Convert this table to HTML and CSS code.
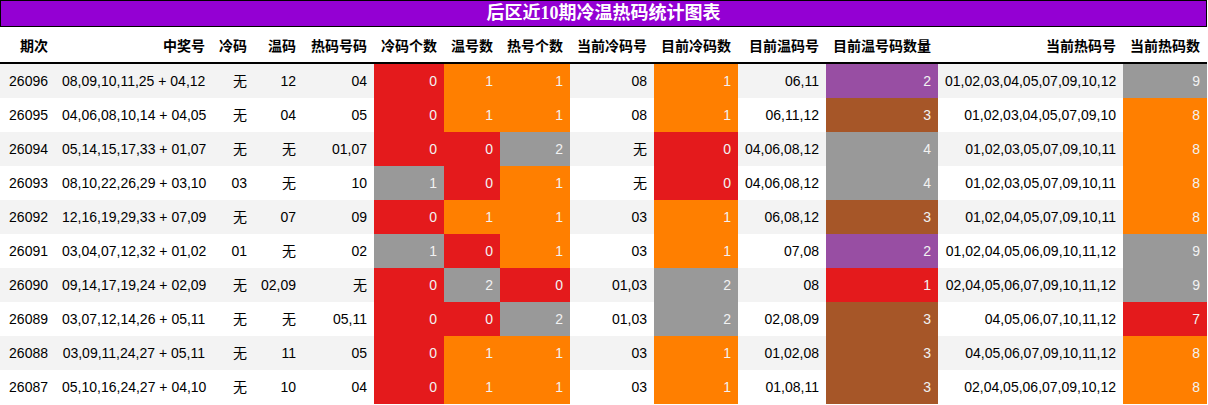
FILE: index.html
```html
<!DOCTYPE html>
<html lang="zh">
<head>
<meta charset="utf-8">
<title>后区近10期冷温热码统计图表</title>
<link rel="stylesheet" href="styles.css">
</head>
<body>
<div class="board">
  <div class="title">后区近10期冷温热码统计图表</div>
  <table class="stats">
    <colgroup>
      <col class="c1"><col class="c2"><col class="c3"><col class="c4"><col class="c5">
      <col class="c6"><col class="c7"><col class="c8"><col class="c9"><col class="c10">
      <col class="c11"><col class="c12"><col class="c13"><col class="c14">
    </colgroup>
    <thead>
      <tr>
        <th>期次</th><th>中奖号</th><th>冷码</th><th>温码</th><th>热码号码</th>
        <th>冷码个数</th><th>温号数</th><th>热号个数</th><th>当前冷码号</th><th>目前冷码数</th>
        <th>目前温码号</th><th>目前温号码数量</th><th>当前热码号</th><th>当前热码数</th>
      </tr>
    </thead>
    <tbody>
      <tr>
        <td>26096</td><td>08,09,10,11,25 + 04,12</td><td>无</td><td>12</td><td>04</td>
        <td class="red">0</td><td class="orange">1</td><td class="orange">1</td><td>08</td><td class="orange">1</td>
        <td>06,11</td><td class="purple">2</td><td>01,02,03,04,05,07,09,10,12</td><td class="gray">9</td>
      </tr>
      <tr>
        <td>26095</td><td>04,06,08,10,14 + 04,05</td><td>无</td><td>04</td><td>05</td>
        <td class="red">0</td><td class="orange">1</td><td class="orange">1</td><td>08</td><td class="orange">1</td>
        <td>06,11,12</td><td class="brown">3</td><td>01,02,03,04,05,07,09,10</td><td class="orange">8</td>
      </tr>
      <tr>
        <td>26094</td><td>05,14,15,17,33 + 01,07</td><td>无</td><td>无</td><td>01,07</td>
        <td class="red">0</td><td class="red">0</td><td class="gray">2</td><td>无</td><td class="red">0</td>
        <td>04,06,08,12</td><td class="gray">4</td><td>01,02,03,05,07,09,10,11</td><td class="orange">8</td>
      </tr>
      <tr>
        <td>26093</td><td>08,10,22,26,29 + 03,10</td><td>03</td><td>无</td><td>10</td>
        <td class="gray">1</td><td class="red">0</td><td class="orange">1</td><td>无</td><td class="red">0</td>
        <td>04,06,08,12</td><td class="gray">4</td><td>01,02,03,05,07,09,10,11</td><td class="orange">8</td>
      </tr>
      <tr>
        <td>26092</td><td>12,16,19,29,33 + 07,09</td><td>无</td><td>07</td><td>09</td>
        <td class="red">0</td><td class="orange">1</td><td class="orange">1</td><td>03</td><td class="orange">1</td>
        <td>06,08,12</td><td class="brown">3</td><td>01,02,04,05,07,09,10,11</td><td class="orange">8</td>
      </tr>
      <tr>
        <td>26091</td><td>03,04,07,12,32 + 01,02</td><td>01</td><td>无</td><td>02</td>
        <td class="gray">1</td><td class="red">0</td><td class="orange">1</td><td>03</td><td class="orange">1</td>
        <td>07,08</td><td class="purple">2</td><td>01,02,04,05,06,09,10,11,12</td><td class="gray">9</td>
      </tr>
      <tr>
        <td>26090</td><td>09,14,17,19,24 + 02,09</td><td>无</td><td>02,09</td><td>无</td>
        <td class="red">0</td><td class="gray">2</td><td class="red">0</td><td>01,03</td><td class="gray">2</td>
        <td>08</td><td class="red">1</td><td>02,04,05,06,07,09,10,11,12</td><td class="gray">9</td>
      </tr>
      <tr>
        <td>26089</td><td>03,07,12,14,26 + 05,11</td><td>无</td><td>无</td><td>05,11</td>
        <td class="red">0</td><td class="red">0</td><td class="gray">2</td><td>01,03</td><td class="gray">2</td>
        <td>02,08,09</td><td class="brown">3</td><td>04,05,06,07,10,11,12</td><td class="red">7</td>
      </tr>
      <tr>
        <td>26088</td><td>03,09,11,24,27 + 05,11</td><td>无</td><td>11</td><td>05</td>
        <td class="red">0</td><td class="orange">1</td><td class="orange">1</td><td>03</td><td class="orange">1</td>
        <td>01,02,08</td><td class="brown">3</td><td>04,05,06,07,09,10,11,12</td><td class="orange">8</td>
      </tr>
      <tr>
        <td>26087</td><td>05,10,16,24,27 + 04,10</td><td>无</td><td>10</td><td>04</td>
        <td class="red">0</td><td class="orange">1</td><td class="orange">1</td><td>03</td><td class="orange">1</td>
        <td>01,08,11</td><td class="brown">3</td><td>02,04,05,06,07,09,10,12</td><td class="orange">8</td>
      </tr>
    </tbody>
  </table>
</div>
</body>
</html>
```

FILE: styles.css
```css
html, body {
  margin: 0;
  padding: 0;
  background: #ffffff;
}

.board {
  width: 1207px;
  font-family: "Liberation Sans", "Noto Sans CJK SC", sans-serif;
  font-size: 14px;
  color: #000000;
}

.title {
  box-sizing: border-box;
  height: 27px;
  border: 1px solid #000000;
  background: #9400d3;
  color: #ffffff;
  font-family: "Liberation Serif", "Noto Sans CJK SC", serif;
  font-weight: bold;
  font-size: 18px;
  line-height: 25px;
  text-align: center;
}

.stats {
  width: 1207px;
  table-layout: fixed;
  border-collapse: collapse;
  border-spacing: 0;
}

.c1 { width: 55px; }
.c2 { width: 157px; }
.c3 { width: 42px; }
.c4 { width: 49px; }
.c5 { width: 71px; }
.c6 { width: 70px; }
.c7 { width: 56px; }
.c8 { width: 70px; }
.c9 { width: 84px; }
.c10 { width: 84px; }
.c11 { width: 88px; }
.c12 { width: 112px; }
.c13 { width: 185px; }
.c14 { width: 84px; }

.stats th,
.stats td {
  padding: 0 7px;
  text-align: right;
  white-space: nowrap;
  overflow: hidden;
}

.stats th {
  height: 35px;
  font-weight: bold;
  font-family: "Noto Sans CJK SC", sans-serif;
  font-size: 14px;
  border-bottom: 2px solid #000000;
  background: #ffffff;
}

.stats td {
  height: 34px;
  line-height: 34px;
}

.stats tbody tr:nth-child(odd) td {
  background: #f3f3f3;
}

.stats tbody tr:nth-child(even) td {
  background: #ffffff;
}

.stats tbody tr td.red { background: #e41a1c; color: #f2f2f2; }
.stats tbody tr td.orange { background: #ff7f00; color: #f2f2f2; }
.stats tbody tr td.gray { background: #999999; color: #f2f2f2; }
.stats tbody tr td.purple { background: #984ea3; color: #f2f2f2; }
.stats tbody tr td.brown { background: #a65628; color: #f2f2f2; }
```
